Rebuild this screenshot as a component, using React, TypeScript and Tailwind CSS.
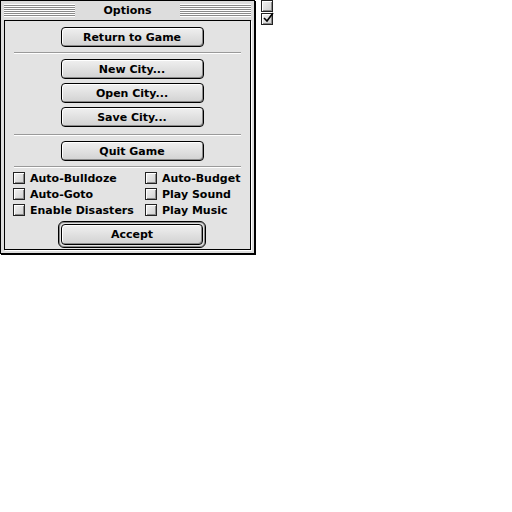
const font = { fontFamily: '"DejaVu Sans", "Liberation Sans", sans-serif' };

function Stripes() {
  return (
    <div className="flex-1 flex flex-col gap-[1px] py-[1px] bg-white">
      <div className="h-[1px] bg-[#8a8a8a]" />
      <div className="h-[1px] bg-[#8a8a8a]" />
      <div className="h-[1px] bg-[#8a8a8a]" />
      <div className="h-[1px] bg-[#8a8a8a]" />
      <div className="h-[1px] bg-[#8a8a8a]" />
      <div className="h-[1px] bg-[#8a8a8a]" />
    </div>
  );
}

function Button({ label }: { label: string }) {
  return (
    <button className="w-[143px] h-[20px] rounded-[4px] border border-black bg-gradient-to-b from-[#f0f0f0] to-[#d2d2d2] shadow-[inset_1px_1px_0_#fff,inset_-1px_-1px_0_#8a8a8a] text-[11px] font-bold text-black leading-none flex items-center justify-center">
      {label}
    </button>
  );
}

function Separator() {
  return <div className="mx-[9px] h-[1px] bg-[#9a9a9a] shadow-[0_1px_0_#fff]" />;
}

function Check({ checked = false }: { checked?: boolean }) {
  return (
    <span className="relative w-[12px] h-[12px] border border-[#222] bg-gradient-to-br from-[#f2f2f2] to-[#cfcfcf] shadow-[inset_1px_1px_0_#fff,inset_-1px_-1px_0_#8a8a8a] shrink-0">
      {checked && (
        <svg className="absolute -top-[2px] left-0" width="12" height="12" viewBox="0 0 12 12">
          <path d="M2 6 L5 9 L11 1" stroke="#000" strokeWidth="1.6" fill="none" />
        </svg>
      )}
    </span>
  );
}

function Option({ label }: { label: string }) {
  return (
    <label className="flex items-center gap-[5px] text-[11px] font-bold text-black leading-none h-[16px]">
      <Check />
      <span>{label}</span>
    </label>
  );
}

export default function App() {
  return (
    <div className="flex items-start gap-[6px] bg-white w-[512px] h-[512px]" style={font}>
      <div className="w-[255px] h-[254px] border border-black bg-[#dddddd] shadow-[1px_1px_0_#000] flex flex-col">
        <div className="h-[19px] flex items-center px-[3px] gap-[28px]">
          <Stripes />
          <span className="text-[11px] font-bold text-black pt-[2px]">Options</span>
          <Stripes />
        </div>
        <div className="flex-1 mx-[3px] mb-[3px] border border-black shadow-[1px_1px_0_#fff] bg-[#e3e3e3] flex flex-col pt-[6px]">
          <div className="flex justify-center pl-[9px]">
            <Button label="Return to Game" />
          </div>
          <div className="mt-[5px] mb-[6px]">
            <Separator />
          </div>
          <div className="flex flex-col items-center gap-[4px] pl-[9px]">
            <Button label="New City..." />
            <Button label="Open City..." />
            <Button label="Save City..." />
          </div>
          <div className="mt-[7px] mb-[6px]">
            <Separator />
          </div>
          <div className="flex justify-center pl-[9px]">
            <Button label="Quit Game" />
          </div>
          <div className="mt-[5px] mb-[3px]">
            <Separator />
          </div>
          <div className="grid grid-cols-[132px_1fr] pl-[8px]">
            <Option label="Auto-Bulldoze" />
            <Option label="Auto-Budget" />
            <Option label="Auto-Goto" />
            <Option label="Play Sound" />
            <Option label="Enable Disasters" />
            <Option label="Play Music" />
          </div>
          <div className="flex justify-center mt-[3px] pl-[9px]">
            <div className="rounded-[6px] border border-black shadow-[inset_0_0_0_1px_#8a8a8a] p-[2px] bg-[#e3e3e3]">
              <button className="w-[142px] h-[21px] rounded-[4px] border border-black bg-gradient-to-b from-[#f0f0f0] to-[#d2d2d2] shadow-[inset_1px_1px_0_#fff,inset_-1px_-1px_0_#8a8a8a] text-[11px] font-bold text-black leading-none flex items-center justify-center">
                Accept
              </button>
            </div>
          </div>
        </div>
      </div>
      <div className="flex flex-col gap-[1px]">
        <Check />
        <Check checked />
      </div>
    </div>
  );
}
